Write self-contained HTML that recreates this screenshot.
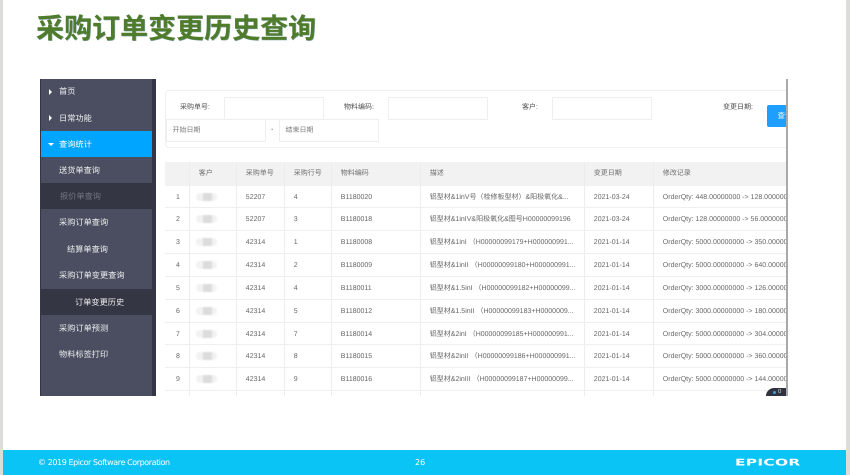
<!DOCTYPE html>
<html><head><meta charset="utf-8">
<style>
html,body{margin:0;padding:0;width:850px;height:475px;overflow:hidden;background:#fff}
body{position:relative;font-family:"Liberation Sans","Noto Sans CJK SC",sans-serif;text-rendering:geometricPrecision}
.a{position:absolute;white-space:nowrap}
.gut{position:absolute;top:0;height:475px;background:#dcdcd8}
#title{left:36px;top:11px;font-size:28px;line-height:36px;font-weight:bold;color:#4f7c2b;text-shadow:.6px .4px 0 #7fa0a8}
#shot{position:absolute;left:40px;top:79px;width:748px;height:317px;overflow:hidden;background:#fff;filter:blur(.3px)}
#side{position:absolute;left:0;top:0;width:116px;height:317px;background:#343743}
#menu{position:absolute;left:1px;top:0;width:111px;height:317px;background:#4a4e60}
.m{position:absolute;left:0;width:111px;height:26px;line-height:28px;font-size:8.2px;color:#eceded}
.m.on{background:#00a5ff;color:#fff}
.m.dk{background:#343743}
.tri{position:absolute;left:8px;top:10px;width:0;height:0;border-left:3px solid #fff;border-top:3px solid transparent;border-bottom:3px solid transparent}
.trd{position:absolute;left:7px;top:12px;width:0;height:0;border-top:3px solid #fff;border-left:3px solid transparent;border-right:3px solid transparent}
.panel{position:absolute;left:125px;top:11px;width:640px;height:56px;border:1px solid #f0f0f0;border-radius:4px}
.inp{position:absolute;height:21px;width:98px;border:1px solid #eeeeee;background:#fff;font-size:7px;line-height:21px;color:#7c7c7c;text-indent:5.5px}
.lb{position:absolute;font-size:7px;color:#4c4c4c;line-height:10px;white-space:nowrap}
.btn{position:absolute;left:727px;top:25.5px;width:30px;height:22px;background:#1e9fff;border-radius:2px;color:#fff;font-size:7.5px;line-height:22px;text-indent:10.5px}
.bar{position:absolute;left:746px;top:0;width:2px;height:317px;background:#a9a9a9}
#tb{position:absolute;left:125px;top:83px;width:621px;height:234px;overflow:hidden}
.r{display:flex;height:22.85px;line-height:23px;box-sizing:border-box;border-bottom:1px solid #efefef;font-size:7px;color:#666}
.r.h{height:23.5px;line-height:24px;background:#f2f2f2;color:#6e6e6e;font-size:7px;border-bottom:0}
.c{box-sizing:border-box;border-right:1px solid #ececec;white-space:nowrap;overflow:hidden;padding-left:8.8px;position:relative;flex:none}
.c1{width:25px;padding-left:11px}.c2{width:47px}.c3{width:48px}.c4{width:47px}.c5{width:89px}.c6{width:164px}.c7{width:69px}.c8{width:132px;border-right:0}
.bl{position:absolute;left:6px;top:7px;width:21px;height:8px;background:#f2f2f2;border-radius:4px;filter:blur(.9px)}
.bl:after{content:"";position:absolute;left:7px;top:0;width:9px;height:8px;background:#dcdcdc}
#badge{position:absolute;left:726px;top:309px;width:24px;height:14px;background:#2f3340;border-radius:8px 0 0 0;color:#ddd;font-size:6px;line-height:9px;text-indent:12px}
#badge:before{content:"";position:absolute;left:7px;top:3px;width:3px;height:3px;border-radius:2px;background:#3aa0e0}
#foot{position:absolute;left:3px;top:450px;width:843px;height:25px;background:#0ac4f5}
#foot div{color:#fff;position:absolute;white-space:nowrap}
</style></head>
<body>
<div class="gut" style="left:0;width:3px"></div>
<div class="gut" style="left:846px;width:4px"></div>
<div class="a" id="title">采购订单变更历史查询</div>

<div id="shot">
  <div id="side"></div>
  <div id="menu">
    <div class="m" style="top:0;line-height:26px"><i class="tri"></i><span class="a" style="left:18px">首页</span></div>
    <div class="m" style="top:26px"><i class="tri"></i><span class="a" style="left:18px">日常功能</span></div>
    <div class="m on" style="top:52px"><i class="trd"></i><span class="a" style="left:18px">查询统计</span></div>
    <div class="m" style="top:78px"><span class="a" style="left:18px">送货单查询</span></div>
    <div class="m dk" style="top:104px;color:#71747f"><span class="a" style="left:19px">报价单查询</span></div>
    <div class="m" style="top:130px"><span class="a" style="left:18px">采购订单查询</span></div>
    <div class="m" style="top:157px"><span class="a" style="left:26px">结算单查询</span></div>
    <div class="m" style="top:183px"><span class="a" style="left:18px">采购订单变更查询</span></div>
    <div class="m dk" style="top:210px"><span class="a" style="left:34px">订单变更历史</span></div>
    <div class="m" style="top:236px"><span class="a" style="left:18px">采购订单预测</span></div>
    <div class="m" style="top:262px"><span class="a" style="left:18px">物料标签打印</span></div>
  </div>

  <div class="panel"></div>
  <div class="lb" style="left:140px;top:24px">采购单号:</div>
  <div class="inp" style="left:184px;top:17.5px"></div>
  <div class="lb" style="left:304px;top:24px">物料编码:</div>
  <div class="inp" style="left:348px;top:17.5px"></div>
  <div class="lb" style="left:482px;top:24px">客户:</div>
  <div class="inp" style="left:512px;top:17.5px"></div>
  <div class="lb" style="left:683px;top:24px">变更日期:</div>
  <div class="inp" style="left:126px;top:40px">开始日期</div>
  <div class="lb" style="left:231px;top:46px">-</div>
  <div class="inp" style="left:239px;top:40px">结束日期</div>
  <div class="btn">查询</div>

  <div id="tb">
    <div class="r h"><div class="c c1"></div><div class="c c2">客户</div><div class="c c3">采购单号</div><div class="c c4">采购行号</div><div class="c c5">物料编码</div><div class="c c6">描述</div><div class="c c7">变更日期</div><div class="c c8">修改记录</div></div>
    <div class="r"><div class="c c1">1</div><div class="c c2"><i class="bl"></i></div><div class="c c3">52207</div><div class="c c4">4</div><div class="c c5">B1180020</div><div class="c c6">铝型材&amp;1inV号（栓修板型材）&amp;阳极氧化&amp;...</div><div class="c c7">2021-03-24</div><div class="c c8">OrderQty: 448.00000000 -&gt; 128.00000000</div></div>
    <div class="r"><div class="c c1">2</div><div class="c c2"><i class="bl"></i></div><div class="c c3">52207</div><div class="c c4">3</div><div class="c c5">B1180018</div><div class="c c6">铝型材&amp;1inIV&amp;阳极氧化&amp;图号H00000099196</div><div class="c c7">2021-03-24</div><div class="c c8">OrderQty: 128.00000000 -&gt; 56.00000000</div></div>
    <div class="r"><div class="c c1">3</div><div class="c c2"><i class="bl"></i></div><div class="c c3">42314</div><div class="c c4">1</div><div class="c c5">B1180008</div><div class="c c6">铝型材&amp;1inI （H00000099179+H000000991...</div><div class="c c7">2021-01-14</div><div class="c c8">OrderQty: 5000.00000000 -&gt; 350.00000000</div></div>
    <div class="r"><div class="c c1">4</div><div class="c c2"><i class="bl"></i></div><div class="c c3">42314</div><div class="c c4">2</div><div class="c c5">B1180009</div><div class="c c6">铝型材&amp;1inII （H00000099180+H000000991...</div><div class="c c7">2021-01-14</div><div class="c c8">OrderQty: 5000.00000000 -&gt; 640.00000000</div></div>
    <div class="r"><div class="c c1">5</div><div class="c c2"><i class="bl"></i></div><div class="c c3">42314</div><div class="c c4">4</div><div class="c c5">B1180011</div><div class="c c6">铝型材&amp;1.5inI （H00000099182+H00000099...</div><div class="c c7">2021-01-14</div><div class="c c8">OrderQty: 3000.00000000 -&gt; 126.00000000</div></div>
    <div class="r"><div class="c c1">6</div><div class="c c2"><i class="bl"></i></div><div class="c c3">42314</div><div class="c c4">5</div><div class="c c5">B1180012</div><div class="c c6">铝型材&amp;1.5inII （H00000099183+H0000009...</div><div class="c c7">2021-01-14</div><div class="c c8">OrderQty: 3000.00000000 -&gt; 180.00000000</div></div>
    <div class="r"><div class="c c1">7</div><div class="c c2"><i class="bl"></i></div><div class="c c3">42314</div><div class="c c4">7</div><div class="c c5">B1180014</div><div class="c c6">铝型材&amp;2inI （H00000099185+H000000991...</div><div class="c c7">2021-01-14</div><div class="c c8">OrderQty: 5000.00000000 -&gt; 304.00000000</div></div>
    <div class="r"><div class="c c1">8</div><div class="c c2"><i class="bl"></i></div><div class="c c3">42314</div><div class="c c4">8</div><div class="c c5">B1180015</div><div class="c c6">铝型材&amp;2inII （H00000099186+H000000991...</div><div class="c c7">2021-01-14</div><div class="c c8">OrderQty: 5000.00000000 -&gt; 360.00000000</div></div>
    <div class="r"><div class="c c1">9</div><div class="c c2"><i class="bl"></i></div><div class="c c3">42314</div><div class="c c4">9</div><div class="c c5">B1180016</div><div class="c c6">铝型材&amp;2inIII （H00000099187+H00000099...</div><div class="c c7">2021-01-14</div><div class="c c8">OrderQty: 5000.00000000 -&gt; 144.00000000</div></div>
    <div class="r"><div class="c c1"></div><div class="c c2"></div><div class="c c3"></div><div class="c c4"></div><div class="c c5"></div><div class="c c6"></div><div class="c c7"></div><div class="c c8"></div></div>
  </div>
  <div id="badge">0</div>
  <div class="bar"></div>
</div>

<div id="foot">
  <div style="left:35px;top:7px;font-size:8px;line-height:11px;font-family:'DejaVu Sans',sans-serif;letter-spacing:-.42px">© 2019 Epicor Software Corporation</div>
  <div style="left:412px;top:7px;font-size:8px;line-height:11px;font-family:'DejaVu Sans',sans-serif">26</div>
  <div style="left:731.5px;top:5px;font-size:11px;line-height:15px;font-weight:bold;font-family:'DejaVu Sans',sans-serif;letter-spacing:.2px;transform-origin:0 50%;transform:scale(1.4,.85)">EPICOR</div>
</div>
</body></html>
